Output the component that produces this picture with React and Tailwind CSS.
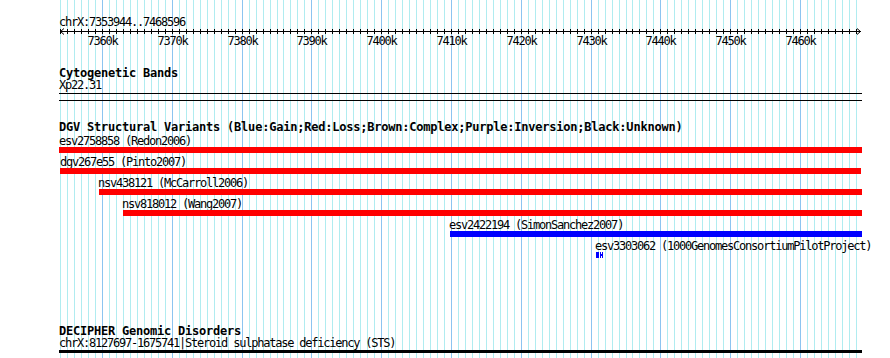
import React from "react";

const gx = (k) => Math.round(102 + (k - 7360) * 6.98);
const KS = Array.from({ length: 115 }, (_, i) => 7354 + i);
const LABELS = Array.from({ length: 11 }, (_, i) => 7360 + i * 10);
const LEFT = 59;

function Grid() {
  return (
    <svg className="absolute left-0 top-0" width="890" height="358" shapeRendering="crispEdges">
      {KS.map((k) => (
        <rect key={k} x={gx(k)} y={0} width={1} height={358} fill={k % 10 === 0 ? "#8cc4f0" : "#b0ecf0"} />
      ))}
    </svg>
  );
}

function Ruler() {
  return (
    <svg width="803" height="20" className="overflow-visible block" shapeRendering="crispEdges">
      <rect x={1} y={3} width={801} height={1} fill="#000" />
      {KS.map((k) => (
        <rect key={k} x={gx(k) - LEFT} y={1} width={1} height={5} fill="#000" />
      ))}
      <polyline points="5,0.5 1.5,3.5 5,6.5" fill="none" stroke="#000" strokeWidth="1" shapeRendering="auto" />
      <polyline points="798,0.5 801.5,3.5 798,6.5" fill="none" stroke="#000" strokeWidth="1" shapeRendering="auto" />
      {LABELS.map((k) => (
        <text
          key={k}
          x={gx(k) - LEFT + 0.5}
          y={17}
          textAnchor="middle"
          fontFamily="'DejaVu Sans Mono', monospace"
          fontSize="12"
          letterSpacing="-1.22"
          fill="#000"
          shapeRendering="auto"
        >
          {k}k
        </text>
      ))}
    </svg>
  );
}

const txt = "h-[12px] leading-[12px] text-[12px] tracking-[-1.22px] whitespace-nowrap";
const bold = "h-[12px] leading-[12px] text-[12px] tracking-[-0.22px] font-bold whitespace-nowrap";

const ITEMS = [
  { label: "esv2758858 (Redon2006)", lx: 0, bx: 0, w: 803, color: "bg-[#ff0000]" },
  { label: "dgv267e55 (Pinto2007)", lx: 1, bx: 1, w: 801, color: "bg-[#ff0000]" },
  { label: "nsv438121 (McCarroll2006)", lx: 39, bx: 40, w: 763, color: "bg-[#ff0000]" },
  { label: "nsv818012 (Wang2007)", lx: 63, bx: 64, w: 739, color: "bg-[#ff0000]" },
  { label: "esv2422194 (SimonSanchez2007)", lx: 390, bx: 391, w: 412, color: "bg-[#0000ff]" },
];

export default function App() {
  return (
    <div className="relative w-[890px] h-[358px] bg-white overflow-hidden text-black font-['DejaVu_Sans_Mono',monospace]">
      <Grid />
      <div className="relative flex flex-col pl-[59px]">
        <div className={`mt-[16px] ${txt}`}>chrX:7353944..7468596</div>
        <Ruler />
        <div className={`mt-[19px] ${bold}`}>Cytogenetic Bands</div>
        <div className={txt}>Xp22.31</div>
        <div className="mt-[2px] h-[1px] w-[803px] bg-black" />
        <div className="mt-[6px] h-[1px] w-[803px] bg-black" />
        <div className={`mt-[20px] ${bold}`}>
          DGV Structural Variants (Blue:Gain;Red:Loss;Brown:Complex;Purple:Inversion;Black:Unknown)
        </div>
        <div className="mt-[2px] flex flex-col gap-[3px]">
          {ITEMS.map((it) => (
            <div key={it.label} className="flex flex-col">
              <div className={txt} style={{ marginLeft: it.lx }}>
                {it.label}
              </div>
              <div className={`h-[6px] ${it.color}`} style={{ marginLeft: it.bx, width: it.w }} />
            </div>
          ))}
          <div className="flex flex-col">
            <div className={`ml-[536px] ${txt}`}>esv3303062 (1000GenomesConsortiumPilotProject)</div>
            <svg className="ml-[537px] block" width="7" height="6" shapeRendering="crispEdges">
              <rect x="0" y="0" width="3" height="6" fill="#0000ff" />
              <rect x="4" y="0" width="1" height="6" fill="#0000ff" />
              <rect x="6" y="0" width="1" height="6" fill="#0000ff" />
              <rect x="4" y="2" width="3" height="2" fill="#0000ff" />
            </svg>
          </div>
        </div>
        <div className={`mt-[67px] ${bold}`}>DECIPHER Genomic Disorders</div>
        <div className={txt}>chrX:8127697-1675741|Steroid sulphatase deficiency (STS)</div>
        <div className="mt-[1px] h-[3px] w-[803px] bg-black" />
      </div>
    </div>
  );
}
